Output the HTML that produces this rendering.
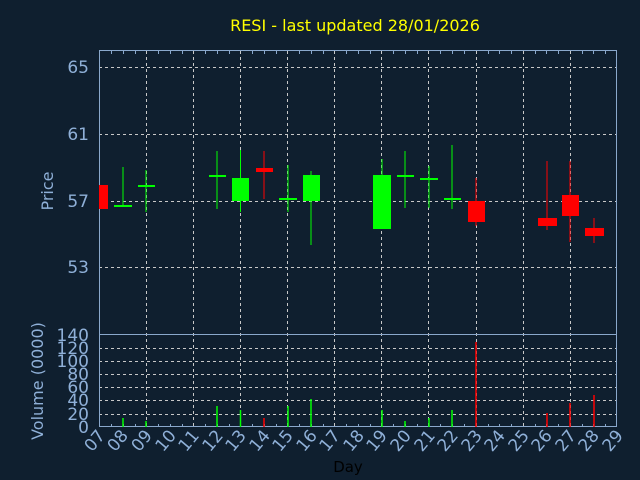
<!DOCTYPE html><html><head><style>html,body{margin:0;padding:0;background:#0f1f2f}svg{display:block}</style></head><body>
<svg width="640" height="480" xmlns="http://www.w3.org/2000/svg" font-family="DejaVu Sans, sans-serif">
<rect width="640" height="480" fill="#0f1f2f"/>
<text x="355" y="31" fill="#ffff00" font-size="16" text-anchor="middle">RESI - last updated 28/01/2026</text>
<g stroke="#c8c8c8" stroke-dasharray="3,3" stroke-width="1">
<line x1="99" x2="617" y1="67.5" y2="67.5"/><line x1="99" x2="617" y1="134.5" y2="134.5"/><line x1="99" x2="617" y1="201.5" y2="201.5"/><line x1="99" x2="617" y1="267.5" y2="267.5"/>
<line x1="99" x2="617" y1="348.5" y2="348.5"/><line x1="99" x2="617" y1="361.5" y2="361.5"/><line x1="99" x2="617" y1="374.5" y2="374.5"/><line x1="99" x2="617" y1="387.5" y2="387.5"/><line x1="99" x2="617" y1="400.5" y2="400.5"/><line x1="99" x2="617" y1="414.5" y2="414.5"/>
<line x1="146.5" x2="146.5" y1="51" y2="427"/><line x1="193.5" x2="193.5" y1="51" y2="427"/><line x1="240.5" x2="240.5" y1="51" y2="427"/><line x1="287.5" x2="287.5" y1="51" y2="427"/><line x1="334.5" x2="334.5" y1="51" y2="427"/><line x1="381.5" x2="381.5" y1="51" y2="427"/><line x1="428.5" x2="428.5" y1="51" y2="427"/><line x1="476.5" x2="476.5" y1="51" y2="427"/><line x1="523.5" x2="523.5" y1="51" y2="427"/><line x1="570.5" x2="570.5" y1="51" y2="427"/>
</g>
<g stroke="#8aa8cc" fill="none"><rect x="99.5" y="50.5" width="517" height="376"/><line x1="99" x2="617" y1="334.5" y2="334.5"/>
<path d="M111.5 51v3M123.5 51v3M135.5 51v3M158.5 51v3M170.5 51v3M182.5 51v3M205.5 51v3M217.5 51v3M229.5 51v3M252.5 51v3M264.5 51v3M276.5 51v3M299.5 51v3M311.5 51v3M323.5 51v3M346.5 51v3M358.5 51v3M370.5 51v3M393.5 51v3M405.5 51v3M417.5 51v3M440.5 51v3M452.5 51v3M464.5 51v3M488.5 51v3M499.5 51v3M511.5 51v3M535.5 51v3M546.5 51v3M558.5 51v3M582.5 51v3M593.5 51v3M605.5 51v3"/>
<path d="M111.5 427v-3M123.5 427v-3M135.5 427v-3M158.5 427v-3M170.5 427v-3M182.5 427v-3M205.5 427v-3M217.5 427v-3M229.5 427v-3M252.5 427v-3M264.5 427v-3M276.5 427v-3M299.5 427v-3M311.5 427v-3M323.5 427v-3M346.5 427v-3M358.5 427v-3M370.5 427v-3M393.5 427v-3M405.5 427v-3M417.5 427v-3M440.5 427v-3M452.5 427v-3M464.5 427v-3M488.5 427v-3M499.5 427v-3M511.5 427v-3M535.5 427v-3M546.5 427v-3M558.5 427v-3M582.5 427v-3M593.5 427v-3M605.5 427v-3"/>
</g>
<g fill="#8fb0d8" font-size="17" text-anchor="end">
<text x="89" y="73">65</text><text x="89" y="140">61</text><text x="89" y="207">57</text><text x="89" y="273">53</text>
<text x="89" y="341">140</text><text x="89" y="354">120</text><text x="89" y="367">100</text><text x="89" y="380">80</text><text x="89" y="393">60</text><text x="89" y="406">40</text><text x="89" y="420">20</text><text x="89" y="433">0</text>
</g>
<text transform="translate(53,191) rotate(-90)" fill="#8fb0d8" font-size="16" text-anchor="middle">Price</text>
<text transform="translate(43,381) rotate(-90)" fill="#8fb0d8" font-size="16" text-anchor="middle">Volume (0000)</text>
<text x="348" y="472" fill="#000" font-size="15" text-anchor="middle">Day</text>
<g fill="#8fb0d8" font-size="17" text-anchor="end">
<text transform="translate(106,436) rotate(-50)">07</text><text transform="translate(129,436) rotate(-50)">08</text><text transform="translate(153,436) rotate(-50)">09</text><text transform="translate(177,436) rotate(-50)">10</text><text transform="translate(200,436) rotate(-50)">11</text><text transform="translate(224,436) rotate(-50)">12</text><text transform="translate(247,436) rotate(-50)">13</text><text transform="translate(271,436) rotate(-50)">14</text><text transform="translate(294,436) rotate(-50)">15</text><text transform="translate(318,436) rotate(-50)">16</text><text transform="translate(341,436) rotate(-50)">17</text><text transform="translate(365,436) rotate(-50)">18</text><text transform="translate(388,436) rotate(-50)">19</text><text transform="translate(412,436) rotate(-50)">20</text><text transform="translate(436,436) rotate(-50)">21</text><text transform="translate(459,436) rotate(-50)">22</text><text transform="translate(483,436) rotate(-50)">23</text><text transform="translate(506,436) rotate(-50)">24</text><text transform="translate(530,436) rotate(-50)">25</text><text transform="translate(553,436) rotate(-50)">26</text><text transform="translate(577,436) rotate(-50)">27</text><text transform="translate(600,436) rotate(-50)">28</text><text transform="translate(624,436) rotate(-50)">29</text>
</g>
<g stroke="#00ff00" stroke-width="1">
<line x1="123" x2="123" y1="167" y2="206"/><line x1="146" x2="146" y1="170" y2="212"/><line x1="217" x2="217" y1="151" y2="209"/><line x1="240.5" x2="240.5" y1="150" y2="212"/><line x1="288" x2="288" y1="165" y2="212"/><line x1="311" x2="311" y1="171" y2="245"/><line x1="382" x2="382" y1="159" y2="229"/><line x1="405" x2="405" y1="151" y2="208"/><line x1="429" x2="429" y1="166" y2="208"/><line x1="452" x2="452" y1="145" y2="209"/>
</g>
<g fill="#00ff00">
<rect x="114" y="205" width="18" height="2"/><rect x="138" y="185" width="17" height="2"/><rect x="209" y="175" width="17" height="2"/><rect x="232" y="178" width="17" height="23"/><rect x="279" y="198" width="18" height="2"/><rect x="303" y="175" width="17" height="26"/><rect x="373" y="175" width="18" height="54"/><rect x="397" y="175" width="17" height="2"/><rect x="420" y="178" width="18" height="2"/><rect x="444" y="198" width="17" height="2"/>
</g>
<g stroke="#ff0000"><line x1="264" x2="264" y1="151" y2="199"/><line x1="476" x2="476" y1="178" y2="226"/><line x1="547" x2="547" y1="161" y2="230"/><line x1="570" x2="570" y1="161" y2="242"/><line x1="594" x2="594" y1="218" y2="243"/></g>
<g fill="#ff0000">
<rect x="99" y="185" width="9" height="24"/><rect x="256" y="168" width="17" height="4"/><rect x="468" y="201" width="17" height="21"/><rect x="538" y="218" width="19" height="8"/><rect x="562" y="195" width="17" height="21"/><rect x="585" y="228" width="19" height="8"/>
</g>
<g stroke-width="1.5">
<line stroke="#00ff00" x1="123" x2="123" y1="418" y2="427"/><line stroke="#00ff00" x1="146" x2="146" y1="421" y2="427"/><line stroke="#00ff00" x1="217" x2="217" y1="406" y2="427"/><line stroke="#00ff00" x1="240.5" x2="240.5" y1="410" y2="427"/><line stroke="#ff0000" x1="264" x2="264" y1="418" y2="427"/><line stroke="#00ff00" x1="288" x2="288" y1="406" y2="427"/><line stroke="#00ff00" x1="311" x2="311" y1="399" y2="427"/><line stroke="#00ff00" x1="382" x2="382" y1="410" y2="427"/><line stroke="#00ff00" x1="405" x2="405" y1="421" y2="427"/><line stroke="#00ff00" x1="429" x2="429" y1="418" y2="427"/><line stroke="#00ff00" x1="452" x2="452" y1="410" y2="427"/><line stroke="#ff0000" x1="476" x2="476" y1="342" y2="427"/><line stroke="#ff0000" x1="547" x2="547" y1="413" y2="427"/><line stroke="#ff0000" x1="570" x2="570" y1="403" y2="427"/><line stroke="#ff0000" x1="594" x2="594" y1="395" y2="427"/>
</g>
</svg>
</body></html>
